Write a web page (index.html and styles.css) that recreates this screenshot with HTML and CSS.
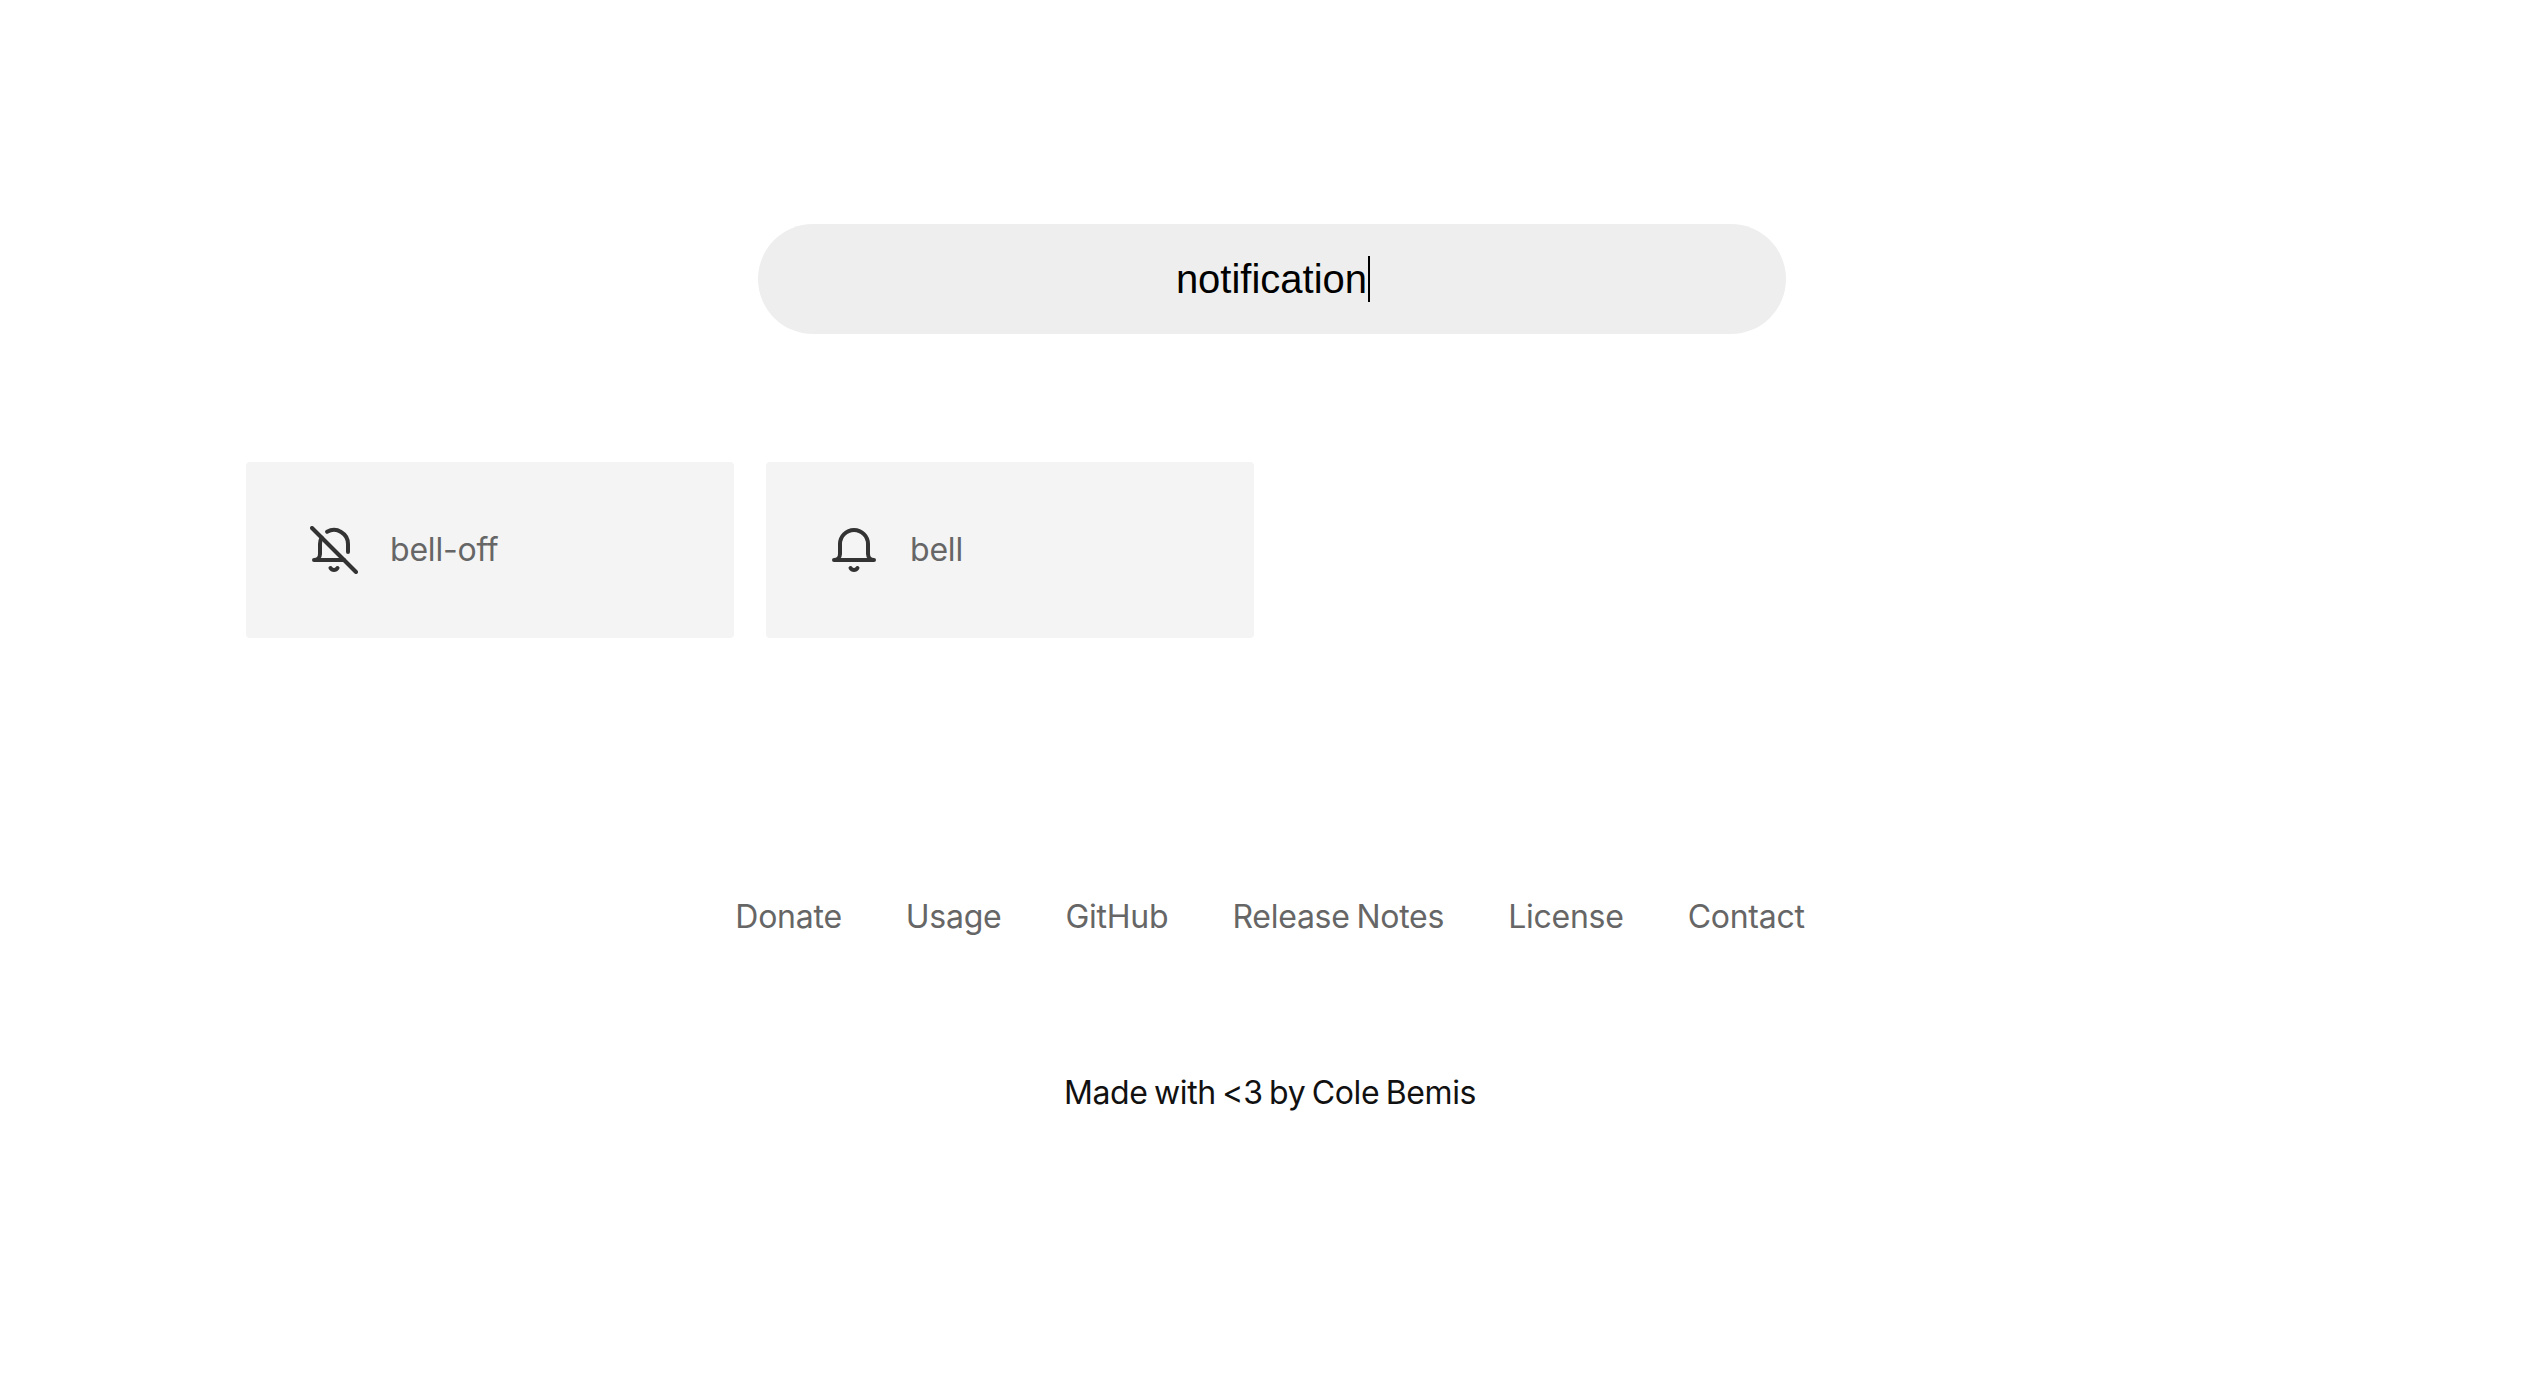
FILE: index.html
```html
<!DOCTYPE html>
<html lang="en">
<head>
<meta charset="utf-8">
<title>Feather</title>
<link rel="stylesheet" href="styles.css">
</head>
<body>
<main class="page">
  <div class="search"><span class="query">notification</span><span class="caret"></span></div>
  <section class="grid">
    <a class="card">
      <svg class="icon" viewBox="0 0 24 24"><path d="M8.56 2.9A7 7 0 0 1 19 9v4m-2 4H2a3 3 0 0 0 3-3V9a7 7 0 0 1 .78-3.22M13.73 21a2 2 0 0 1-3.46 0"/><line x1="1" y1="1" x2="23" y2="23"/></svg>
      <span class="name">bell-off</span>
    </a>
    <a class="card">
      <svg class="icon" viewBox="0 0 24 24"><path d="M22 17H2a3 3 0 0 0 3-3V9a7 7 0 0 1 14 0v5a3 3 0 0 0 3 3zm-8.27 4a2 2 0 0 1-3.46 0"/></svg>
      <span class="name">bell</span>
    </a>
  </section>
  <nav class="links">
    <a>Donate</a><a>Usage</a><a>GitHub</a><a>Release Notes</a><a>License</a><a>Contact</a>
  </nav>
  <p class="credit">Made with &lt;3 by Cole Bemis</p>
</main>
</body>
</html>
```
FILE: styles.css
```css
html, body { margin: 0; background: #fff; }
.page {
  width: 2048px;
  margin-left: 246px;
  padding-top: 224px;
  height: 1152px;
  font-family: "Inter", "Liberation Sans", sans-serif;
  font-size: 32px;
}
.search {
  box-sizing: border-box;
  width: 1028px;
  height: 110px;
  margin-left: 512px;
  padding-left: 2px;
  border-radius: 55px;
  background: #eee;
  display: flex;
  align-items: center;
  justify-content: center;
  font-family: "Liberation Sans", Arial, sans-serif;
  font-size: 40px;
  color: #000;
}
.caret { width: 2px; height: 46px; background: #000; margin-left: 1px; }
.grid {
  display: grid;
  grid-template-columns: repeat(4, 1fr);
  gap: 32px;
  margin-top: 128px;
}
.card {
  height: 176px;
  padding: 0 64px;
  border-radius: 4px;
  background: #f4f4f4;
  display: flex;
  align-items: center;
  gap: 32px;
}
.icon {
  width: 48px;
  height: 48px;
  fill: none;
  stroke: #333;
  stroke-width: 2;
  stroke-linecap: round;
  stroke-linejoin: round;
}
.name { color: #666; letter-spacing: -0.2px; padding-bottom: 2px; }
.links {
  display: flex;
  justify-content: center;
  gap: 64px;
  margin-top: 240px;
  color: #666;
  line-height: 78px;
  letter-spacing: -0.25px;
  word-spacing: -2px;
}
.credit {
  margin: 98px 0 0;
  text-align: center;
  color: #111;
  line-height: 78px;
  letter-spacing: -0.4px;
  word-spacing: -2px;
}
```
